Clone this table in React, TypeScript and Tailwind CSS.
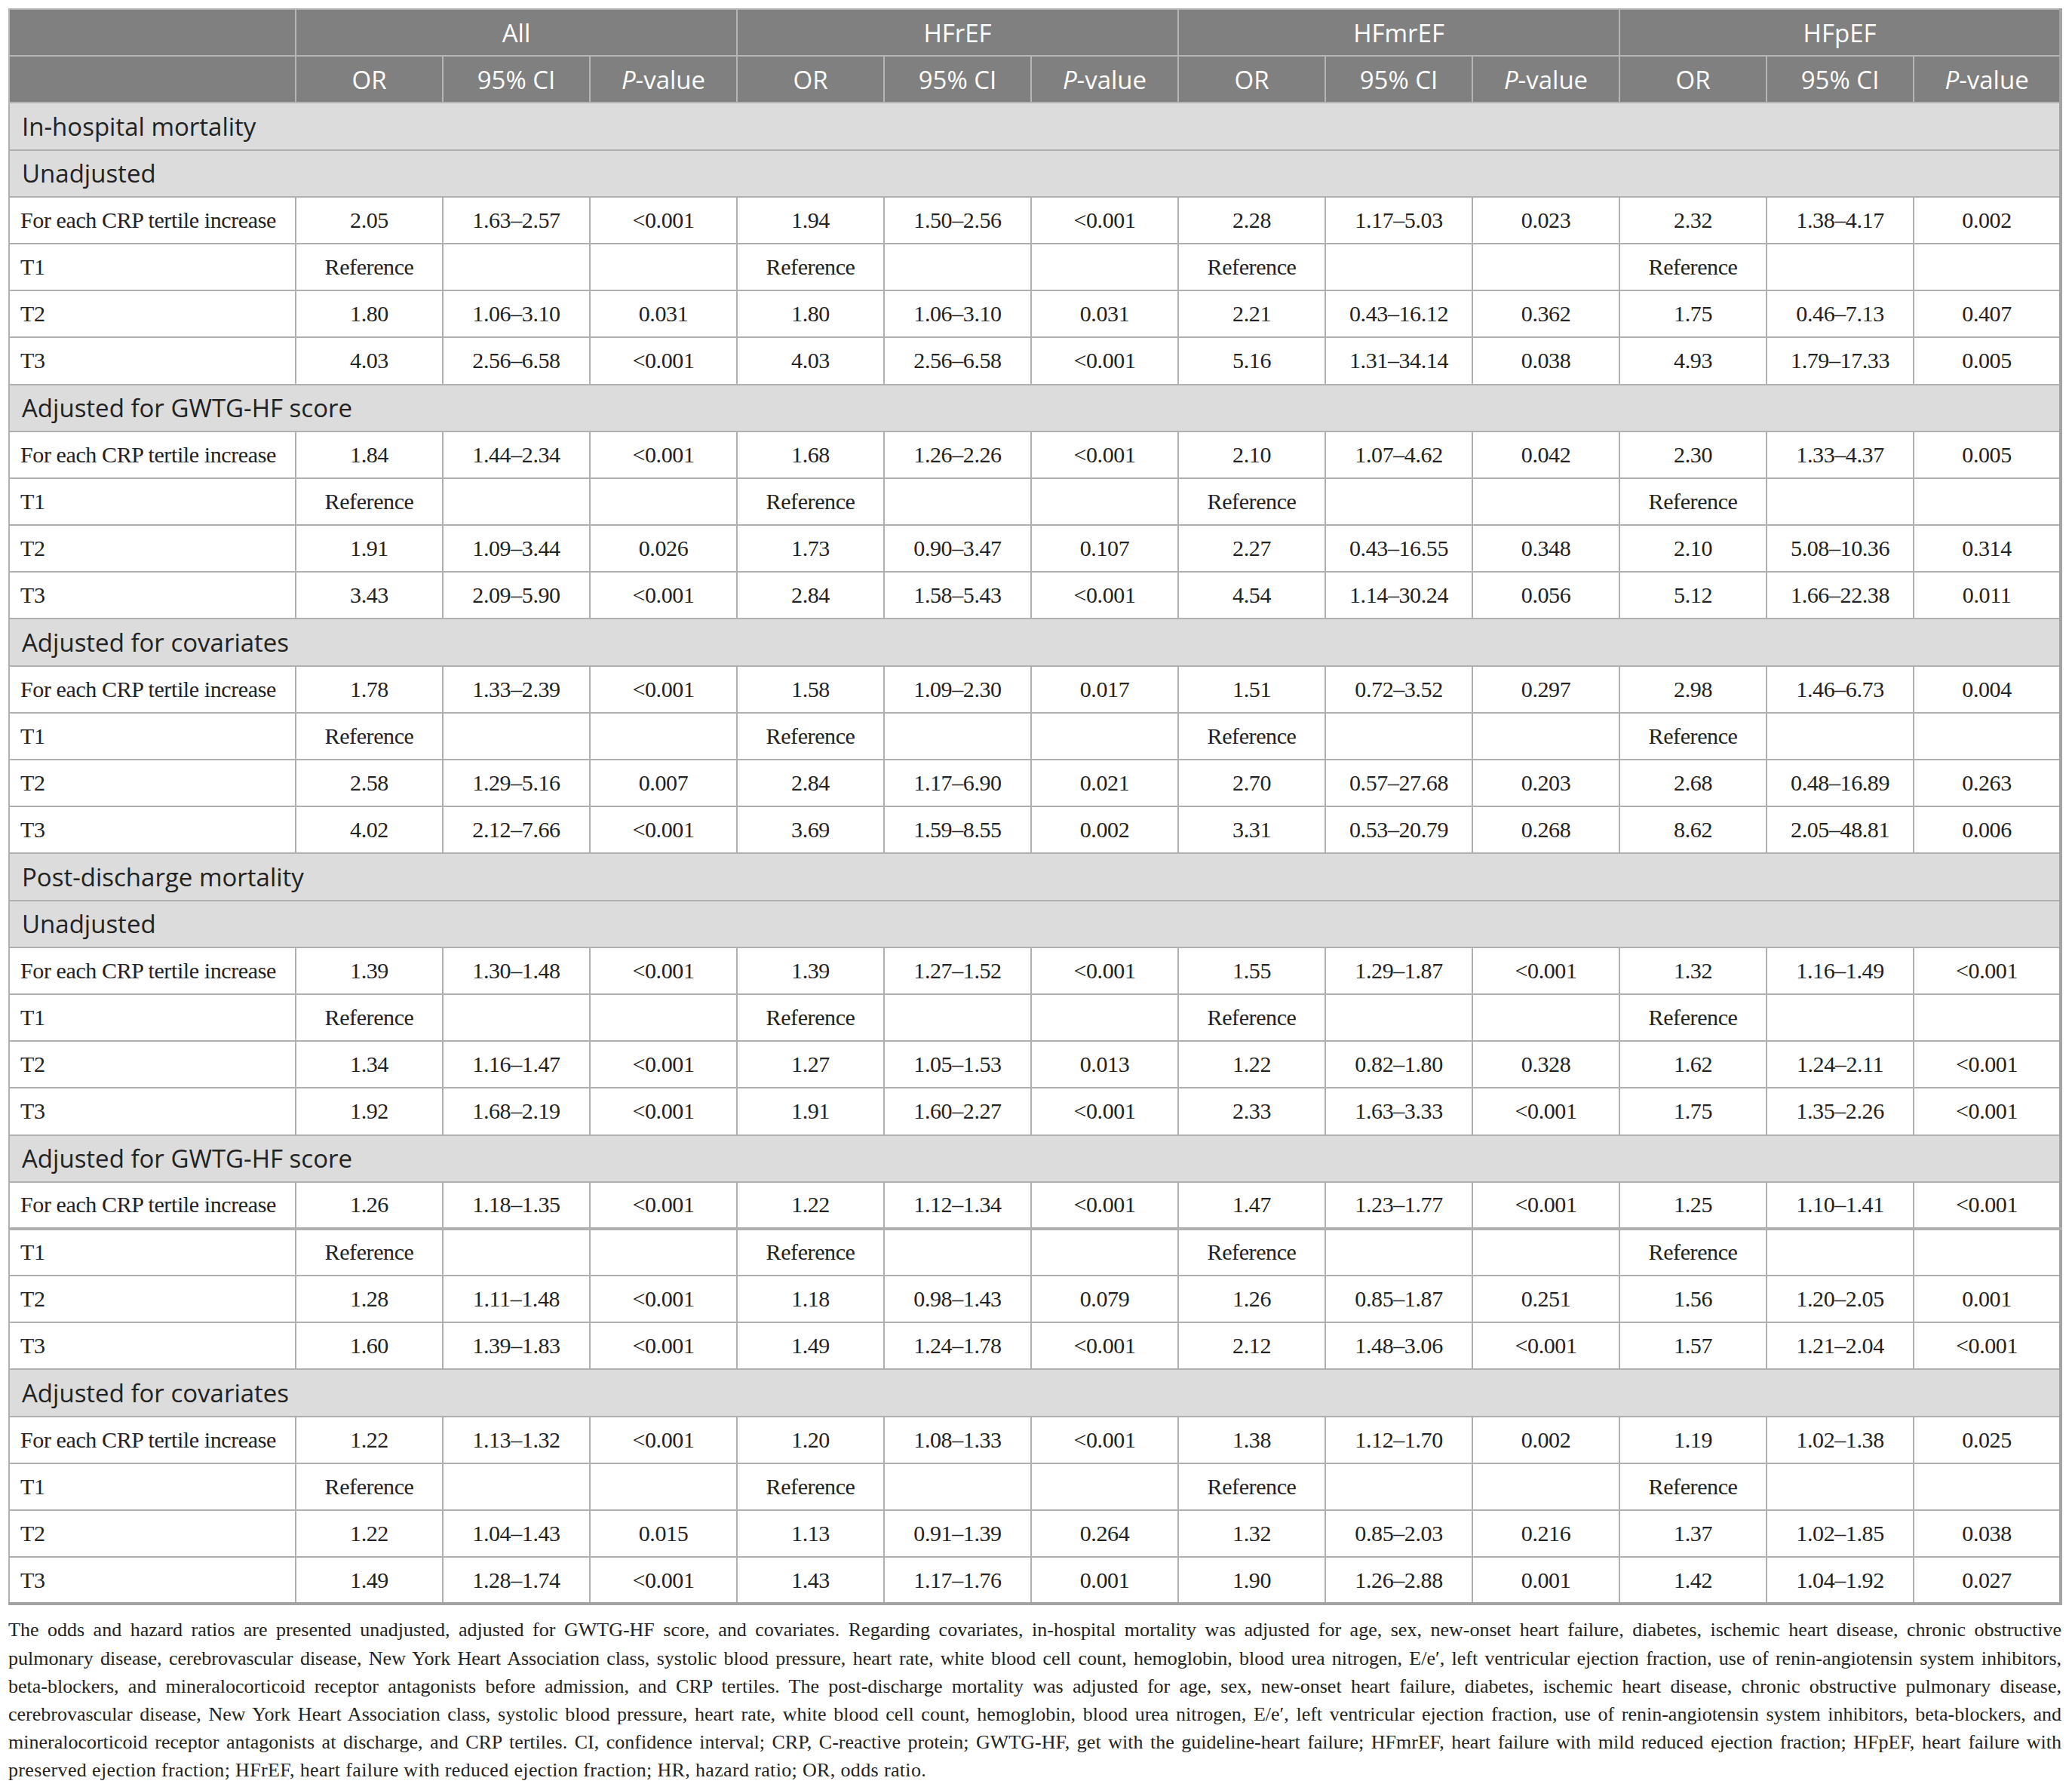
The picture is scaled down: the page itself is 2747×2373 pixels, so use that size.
import React from "react";

type Row =
  | { kind: "section"; label: string }
  | { kind: "data"; label: string; values: string[]; thick?: boolean };

const R = ["Reference", "", "", "Reference", "", "", "Reference", "", "", "Reference", "", ""];

const rows: Row[] = [
  { kind: "section", label: "In-hospital mortality" },
  { kind: "section", label: "Unadjusted" },
  { kind: "data", label: "For each CRP tertile increase", values: ["2.05", "1.63–2.57", "<0.001", "1.94", "1.50–2.56", "<0.001", "2.28", "1.17–5.03", "0.023", "2.32", "1.38–4.17", "0.002"] },
  { kind: "data", label: "T1", values: R },
  { kind: "data", label: "T2", values: ["1.80", "1.06–3.10", "0.031", "1.80", "1.06–3.10", "0.031", "2.21", "0.43–16.12", "0.362", "1.75", "0.46–7.13", "0.407"] },
  { kind: "data", label: "T3", values: ["4.03", "2.56–6.58", "<0.001", "4.03", "2.56–6.58", "<0.001", "5.16", "1.31–34.14", "0.038", "4.93", "1.79–17.33", "0.005"] },
  { kind: "section", label: "Adjusted for GWTG-HF score" },
  { kind: "data", label: "For each CRP tertile increase", values: ["1.84", "1.44–2.34", "<0.001", "1.68", "1.26–2.26", "<0.001", "2.10", "1.07–4.62", "0.042", "2.30", "1.33–4.37", "0.005"] },
  { kind: "data", label: "T1", values: R },
  { kind: "data", label: "T2", values: ["1.91", "1.09–3.44", "0.026", "1.73", "0.90–3.47", "0.107", "2.27", "0.43–16.55", "0.348", "2.10", "5.08–10.36", "0.314"] },
  { kind: "data", label: "T3", values: ["3.43", "2.09–5.90", "<0.001", "2.84", "1.58–5.43", "<0.001", "4.54", "1.14–30.24", "0.056", "5.12", "1.66–22.38", "0.011"] },
  { kind: "section", label: "Adjusted for covariates" },
  { kind: "data", label: "For each CRP tertile increase", values: ["1.78", "1.33–2.39", "<0.001", "1.58", "1.09–2.30", "0.017", "1.51", "0.72–3.52", "0.297", "2.98", "1.46–6.73", "0.004"] },
  { kind: "data", label: "T1", values: R },
  { kind: "data", label: "T2", values: ["2.58", "1.29–5.16", "0.007", "2.84", "1.17–6.90", "0.021", "2.70", "0.57–27.68", "0.203", "2.68", "0.48–16.89", "0.263"] },
  { kind: "data", label: "T3", values: ["4.02", "2.12–7.66", "<0.001", "3.69", "1.59–8.55", "0.002", "3.31", "0.53–20.79", "0.268", "8.62", "2.05–48.81", "0.006"] },
  { kind: "section", label: "Post-discharge mortality" },
  { kind: "section", label: "Unadjusted" },
  { kind: "data", label: "For each CRP tertile increase", values: ["1.39", "1.30–1.48", "<0.001", "1.39", "1.27–1.52", "<0.001", "1.55", "1.29–1.87", "<0.001", "1.32", "1.16–1.49", "<0.001"] },
  { kind: "data", label: "T1", values: R },
  { kind: "data", label: "T2", values: ["1.34", "1.16–1.47", "<0.001", "1.27", "1.05–1.53", "0.013", "1.22", "0.82–1.80", "0.328", "1.62", "1.24–2.11", "<0.001"] },
  { kind: "data", label: "T3", values: ["1.92", "1.68–2.19", "<0.001", "1.91", "1.60–2.27", "<0.001", "2.33", "1.63–3.33", "<0.001", "1.75", "1.35–2.26", "<0.001"] },
  { kind: "section", label: "Adjusted for GWTG-HF score" },
  { kind: "data", label: "For each CRP tertile increase", thick: true, values: ["1.26", "1.18–1.35", "<0.001", "1.22", "1.12–1.34", "<0.001", "1.47", "1.23–1.77", "<0.001", "1.25", "1.10–1.41", "<0.001"] },
  { kind: "data", label: "T1", values: R },
  { kind: "data", label: "T2", values: ["1.28", "1.11–1.48", "<0.001", "1.18", "0.98–1.43", "0.079", "1.26", "0.85–1.87", "0.251", "1.56", "1.20–2.05", "0.001"] },
  { kind: "data", label: "T3", values: ["1.60", "1.39–1.83", "<0.001", "1.49", "1.24–1.78", "<0.001", "2.12", "1.48–3.06", "<0.001", "1.57", "1.21–2.04", "<0.001"] },
  { kind: "section", label: "Adjusted for covariates" },
  { kind: "data", label: "For each CRP tertile increase", values: ["1.22", "1.13–1.32", "<0.001", "1.20", "1.08–1.33", "<0.001", "1.38", "1.12–1.70", "0.002", "1.19", "1.02–1.38", "0.025"] },
  { kind: "data", label: "T1", values: R },
  { kind: "data", label: "T2", values: ["1.22", "1.04–1.43", "0.015", "1.13", "0.91–1.39", "0.264", "1.32", "0.85–2.03", "0.216", "1.37", "1.02–1.85", "0.038"] },
  { kind: "data", label: "T3", values: ["1.49", "1.28–1.74", "<0.001", "1.43", "1.17–1.76", "0.001", "1.90", "1.26–2.88", "0.001", "1.42", "1.04–1.92", "0.027"] },
];

const groups = ["All", "HFrEF", "HFmrEF", "HFpEF"];

const footLines = [
  "The odds and hazard ratios are presented unadjusted, adjusted for GWTG-HF score, and covariates. Regarding covariates, in-hospital mortality was adjusted for age, sex, new-onset heart failure, diabetes, ischemic heart disease, chronic obstructive",
  "pulmonary disease, cerebrovascular disease, New York Heart Association class, systolic blood pressure, heart rate, white blood cell count, hemoglobin, blood urea nitrogen, E/e′, left ventricular ejection fraction, use of renin-angiotensin system inhibitors,",
  "beta-blockers, and mineralocorticoid receptor antagonists before admission, and CRP tertiles. The post-discharge mortality was adjusted for age, sex, new-onset heart failure, diabetes, ischemic heart disease, chronic obstructive pulmonary disease,",
  "cerebrovascular disease, New York Heart Association class, systolic blood pressure, heart rate, white blood cell count, hemoglobin, blood urea nitrogen, E/e′, left ventricular ejection fraction, use of renin-angiotensin system inhibitors, beta-blockers, and",
  "mineralocorticoid receptor antagonists at discharge, and CRP tertiles. CI, confidence interval; CRP, C-reactive protein; GWTG-HF, get with the guideline-heart failure; HFmrEF, heart failure with mild reduced ejection fraction; HFpEF, heart failure with",
];
const lastLine = "preserved ejection fraction; HFrEF, heart failure with reduced ejection fraction; HR, hazard ratio; OR, odds ratio.";

const sans = "font-['Open_Sans',sans-serif]";
const serif = "font-['Liberation_Serif',serif]";

export default function App() {
  return (
    <div className="min-h-[2373px] w-[2747px] bg-white pl-[11px] pt-[11px]">
      <table className="table-fixed border-collapse border-b-4 border-r-4 border-b-[#a3a3a3] border-r-[#a3a3a3] w-[2722px]">
        <colgroup>
          <col className="w-[380px]" />
          {Array.from({ length: 12 }).map((_, i) => (
            <col key={i} className="w-[195px]" />
          ))}
        </colgroup>
        <thead>
          <tr className="h-[62.2px] bg-[#808080]">
            <th className="border-2 border-[#b5b5b5] p-0" />
            {groups.map((g) => (
              <th
                key={g}
                colSpan={3}
                className={`border-2 border-[#b5b5b5] p-0 text-center align-middle text-[33px] font-normal leading-none text-white ${sans}`}
              >
                {g}
              </th>
            ))}
          </tr>
          <tr className="h-[62.2px] bg-[#808080]">
            <th className="border-2 border-[#b5b5b5] p-0" />
            {groups.map((g) => (
              <React.Fragment key={g}>
                <th className={`border-2 border-[#b5b5b5] p-0 text-center text-[33px] font-normal leading-none text-white ${sans}`}>OR</th>
                <th className={`border-2 border-[#b5b5b5] p-0 text-center text-[33px] font-normal leading-none text-white ${sans}`}>95% CI</th>
                <th className={`border-2 border-[#b5b5b5] p-0 text-center text-[33px] font-normal leading-none text-white ${sans}`}>
                  <i>P</i>-value
                </th>
              </React.Fragment>
            ))}
          </tr>
        </thead>
        <tbody>
          {rows.map((r, idx) =>
            r.kind === "section" ? (
              <tr key={idx} className="h-[62.2px] bg-[#dcdcdc]">
                <td
                  colSpan={13}
                  className={`border-2 border-[#b0b0b0] px-[16px] py-0 text-left text-[33px] leading-none text-[#222] ${sans}`}
                >
                  {r.label}
                </td>
              </tr>
            ) : (
              <tr
                key={idx}
                className={`h-[62.2px] bg-white ${r.thick ? "border-b-4 border-b-[#b0b0b0]" : ""}`}
              >
                <td className={`border-2 border-[#b0b0b0] px-[14px] py-0 text-left text-[30px] tracking-[-0.4px] leading-none text-[#222] ${serif} ${r.thick ? "border-b-4" : ""}`}>
                  {r.label}
                </td>
                {r.values.map((v, j) => (
                  <td
                    key={j}
                    className={`border-2 border-[#b0b0b0] p-0 text-center text-[30px] tracking-[-0.4px] leading-none text-[#222] ${serif} ${r.thick ? "border-b-4" : ""}`}
                  >
                    {v}
                  </td>
                ))}
              </tr>
            )
          )}
        </tbody>
      </table>
      <div className={`mt-[14px] w-[2722px] text-[26px] leading-[37.2px] text-[#222] ${serif}`}>
        {footLines.map((l, i) => (
          <div key={i} className="text-justify [word-spacing:-3px] [text-align-last:justify]">
            {l}
          </div>
        ))}
        <div className="text-left tracking-[0.35px]">{lastLine}</div>
      </div>
    </div>
  );
}
